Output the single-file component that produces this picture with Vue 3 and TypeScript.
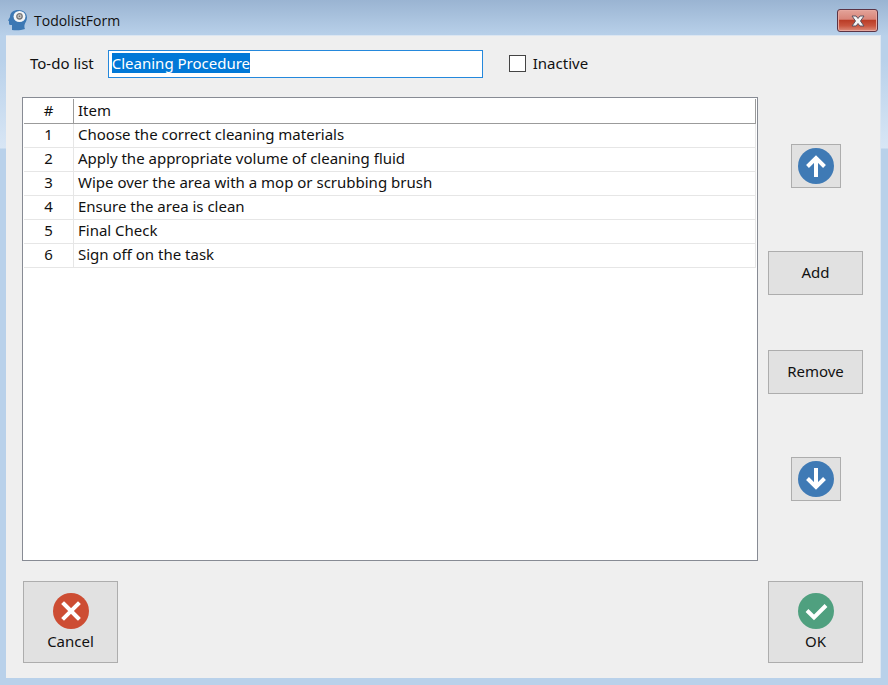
<script setup lang="ts">
import { onMounted, ref } from 'vue'

interface TodoItem {
  id: number
  text: string
}

const listName = ref('Cleaning Procedure')
const inactive = ref(false)
const nameInput = ref<HTMLInputElement | null>(null)
const selectedId = ref<number | null>(null)
const items = ref<TodoItem[]>([
  { id: 1, text: 'Choose the correct cleaning materials' },
  { id: 2, text: 'Apply the appropriate volume of cleaning fluid' },
  { id: 3, text: 'Wipe over the area with a mop or scrubbing brush' },
  { id: 4, text: 'Ensure the area is clean' },
  { id: 5, text: 'Final Check' },
  { id: 6, text: 'Sign off on the task' },
])

function move(step: number): void {
  const from = items.value.findIndex((item) => item.id === selectedId.value)
  const to = from + step
  if (from < 0 || to < 0 || to >= items.value.length) return
  const [item] = items.value.splice(from, 1)
  items.value.splice(to, 0, item)
}

function add(): void {
  const id = Math.max(0, ...items.value.map((item) => item.id)) + 1
  items.value.push({ id, text: '' })
}

function removeSelected(): void {
  items.value = items.value.filter((item) => item.id !== selectedId.value)
}

onMounted(() => {
  nameInput.value?.focus()
  nameInput.value?.select()
})
</script>

<template>
  <div class="window">
    <header class="titlebar">
      <svg class="app-icon" viewBox="0 0 20 22" aria-hidden="true">
        <path d="M4 21v-5H2.500q-1.500 0-1.500-1.500V12L0 11.500 2 8C2 3.500 5.500 1 10.500 1 15.500 1 19 4 19 8.500c0 3.500-2 5-2.500 7.500-.3 1.500 0 3 .5 4-4 1.500-9 1.500-13 1z" fill="#3c78b4" />
        <ellipse cx="11.500" cy="7.500" rx="6" ry="5.500" fill="#f4f6f8" />
        <circle cx="11.500" cy="7.300" r="2.700" fill="#c5c5c5" stroke="#777" stroke-width="1.300" />
        <circle cx="11.500" cy="7.300" r=".8" fill="#666" />
      </svg>
      <h1 class="title">TodolistForm</h1>
      <button class="close" type="button" aria-label="Close">
        <svg viewBox="0 0 14 12" aria-hidden="true">
          <path d="M1 1h4l2 2.500L9 1h4L9.500 6 13 11H9L7 8.500 5 11H1l3.500-5z" fill="#f5f5f5" stroke="#5b5260" stroke-width="1" stroke-linejoin="round" />
        </svg>
      </button>
    </header>

    <main class="client">
      <div class="fields">
        <label for="list-name">To-do list</label>
        <input id="list-name" ref="nameInput" v-model="listName" class="name" type="text" spellcheck="false" />
        <label class="check">
          <input v-model="inactive" type="checkbox" />
          <span>Inactive</span>
        </label>
      </div>

      <div class="body">
        <div class="list">
          <table>
            <thead>
              <tr><th class="num" scope="col">#</th><th scope="col">Item</th></tr>
            </thead>
            <tbody>
              <tr v-for="(item, index) in items" :key="item.id" :class="{ selected: item.id === selectedId }" @click="selectedId = item.id">
                <td class="num">{{ index + 1 }}</td>
                <td>{{ item.text }}</td>
              </tr>
            </tbody>
          </table>
        </div>

        <div class="side">
          <button class="btn arrow" type="button" aria-label="Move up" @click="move(-1)">
            <svg viewBox="0 0 36 36" aria-hidden="true">
              <circle cx="18" cy="18" r="18" fill="#3f7ab5" />
              <path d="M18 29V9M9.500 18.500L18 10l8.500 8.500" fill="none" stroke="#fff" stroke-width="4" />
            </svg>
          </button>
          <div class="edit">
            <button class="btn" type="button" @click="add">Add</button>
            <button class="btn" type="button" @click="removeSelected">Remove</button>
          </div>
          <button class="btn arrow" type="button" aria-label="Move down" @click="move(1)">
            <svg viewBox="0 0 36 36" aria-hidden="true">
              <circle cx="18" cy="18" r="18" fill="#3f7ab5" />
              <path d="M18 7v20M9.500 17.500L18 26l8.500-8.500" fill="none" stroke="#fff" stroke-width="4" />
            </svg>
          </button>
        </div>
      </div>

      <footer class="actions">
        <button class="btn big" type="button">
          <svg viewBox="0 0 36 36" aria-hidden="true">
            <circle cx="18" cy="18" r="18" fill="#cd4d33" />
            <path d="M11 11l14 14M25 11l-14 14" stroke="#fff" stroke-width="4" stroke-linecap="square" />
          </svg>
          Cancel
        </button>
        <button class="btn big" type="button">
          <svg viewBox="0 0 36 36" aria-hidden="true">
            <circle cx="18" cy="18" r="18" fill="#4fa07f" />
            <path d="M9 17.500l7 7L28 12.500" fill="none" stroke="#fff" stroke-width="4" />
          </svg>
          OK
        </button>
      </footer>
    </main>
  </div>
</template>

<style>
body {
  margin: 0;
}
</style>

<style scoped>
.window {
  box-sizing: border-box;
  display: flex;
  flex-direction: column;
  min-height: 100vh;
  padding: 0 7px 7px 6px;
  background:
    linear-gradient(#9ab4d2, #b9d1ea 36px, transparent 36px),
    linear-gradient(#b9d1ea 60px, #d8e6f5 148px, #b9d1ea 149px);
  color: #111;
  font-family: "Noto Sans", Tahoma, sans-serif;
  font-size: 15px;
  line-height: 20px;
}

.titlebar {
  display: flex;
  align-items: center;
  height: 35px;
}

.app-icon {
  width: 20px;
  height: 22px;
  margin: 5px 6px 0 2px;
}

.title {
  flex: 1;
  margin: 7px 0 0;
  font: 400 14px/20px "Open Sans", sans-serif;
}

.close {
  display: grid;
  place-items: center;
  box-sizing: border-box;
  width: 41px;
  height: 23px;
  margin: 6px 3px 0 0;
  padding: 0;
  border: 1px solid #5b3445;
  border-radius: 3px;
  box-shadow: inset 0 0 0 1px #e7a79e;
  background: linear-gradient(#e3a399, #d88478 45%, #b83a24 46%, #c9553f 75%, #dd8d7c);
}

.close svg {
  width: 14px;
  height: 12px;
}

.client {
  display: flex;
  flex: 1;
  flex-direction: column;
  padding: 14px 17px 15px 16px;
  border: solid #dce6f1;
  border-width: 1px 1px 0 0;
  background: #efefef;
}

.fields {
  display: flex;
  align-items: center;
  padding-left: 8px;
}

.fields label {
  padding-bottom: 2px;
}

.name {
  box-sizing: border-box;
  width: 46%;
  max-width: 375px;
  height: 28px;
  margin: 0 26px 0 14px;
  padding: 0 3px 2px;
  border: 1px solid #2488dc;
  outline: 0;
  background: #fff;
  color: #111;
  font: inherit;
}

.name::selection {
  background: #0078d7;
  color: #fff;
}

.check {
  display: flex;
  align-items: center;
  gap: 7px;
}

.check input {
  appearance: none;
  box-sizing: border-box;
  width: 17px;
  height: 17px;
  margin: 0;
  border: 1px solid #444;
  background: #fff;
}

.check input:checked {
  background: #0078d7;
}

.body {
  display: flex;
  flex: 1;
  gap: 10px;
  margin-top: 19px;
}

.list {
  flex: 1;
  padding: 1px;
  border: 1px solid #878b94;
  background: #fff;
}

table {
  width: 100%;
  border-spacing: 0;
}

th,
td {
  box-sizing: border-box;
  height: 24px;
  padding: 0 4px 3px;
  border: solid #e6e6e6;
  border-width: 0 1px 1px 0;
  font-weight: 400;
  line-height: 20px;
  text-align: left;
}

th {
  height: 25px;
  border-color: #9b9b9b;
}

.num {
  width: 50px;
  text-align: center;
}

.selected {
  background: #cce8ff;
}

.side {
  display: flex;
  flex-direction: column;
  align-items: center;
  justify-content: space-between;
  padding: 47px 0 60px;
}

.edit {
  display: grid;
  gap: 55px;
}

.btn {
  display: flex;
  flex-direction: column;
  align-items: center;
  justify-content: center;
  box-sizing: border-box;
  width: 95px;
  height: 44px;
  padding: 0 0 2px;
  border: 1px solid #adadad;
  background: #e1e1e1;
  color: #111;
  font: inherit;
}

.btn svg {
  width: 36px;
  height: 36px;
}

.arrow {
  width: 50px;
  padding: 0;
}

.actions {
  display: flex;
  justify-content: space-between;
  margin-top: 20px;
  padding-left: 1px;
}

.big {
  gap: 2px;
  height: 82px;
  padding: 0;
}
</style>
